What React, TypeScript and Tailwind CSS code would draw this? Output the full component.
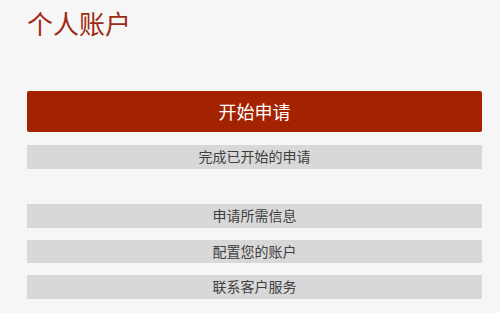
export default function App() {
  const items = ["申请所需信息", "配置您的账户", "联系客户服务"];
  return (
    <div
      className="w-[500px] h-[313px] overflow-hidden bg-[#f6f6f6] px-[27px]"
      style={{ fontFamily: '"Noto Sans CJK SC", "Noto Sans", sans-serif' }}
    >
      <h1 className="pt-[6px] text-[26px] leading-[34px] text-[#a02a12] font-normal">个人账户</h1>
      <button className="mt-[51px] w-[455px] h-[41px] rounded-[2px] bg-[#a32200] text-white text-[18px] leading-[41px] flex items-center justify-center">
        开始申请
      </button>
      <button className="mt-[13px] w-[455px] h-[23.5px] bg-[#d8d8d8] text-[#404040] text-[14px] flex items-center justify-center">
        完成已开始的申请
      </button>
      <div className="mt-[35.5px] flex flex-col gap-[12px]">
        {items.map((t) => (
          <button
            key={t}
            className="w-[455px] h-[23.5px] bg-[#d8d8d8] text-[#404040] text-[14px] flex items-center justify-center"
          >
            {t}
          </button>
        ))}
      </div>
    </div>
  );
}
